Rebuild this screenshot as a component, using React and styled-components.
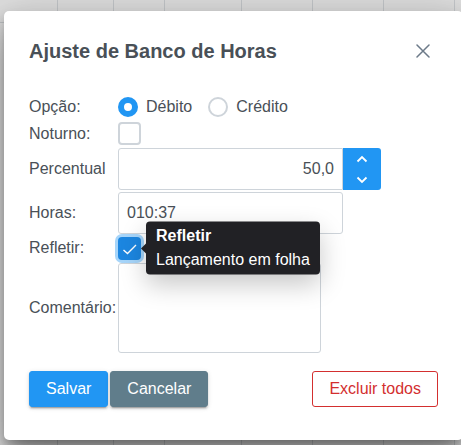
import React from "react";
import styled, { createGlobalStyle } from "styled-components";

const Global = createGlobalStyle`
  html, body { margin: 0; padding: 0; }
  body {
    font-family: "Liberation Sans", Arial, Helvetica, sans-serif;
    background: #ffffff;
    width: 461px;
    height: 445px;
    overflow: hidden;
  }
  * { box-sizing: border-box; }
`;

const Page = styled.div`
  width: 461px;
  height: 445px;
  position: relative;
  overflow: hidden;
  background: #fff;
`;

const GridTable = styled.div`
  display: flex;
  height: 445px;
`;

const GridCol = styled.div`
  width: ${(p) => p.$w}px;
  flex: none;
  border-right: 1px solid #dcdfe2;
  display: flex;
  flex-direction: column;
`;

const GridHead = styled.div`
  height: 23px;
  border-bottom: 1px solid #dcdfe2;
  background: #fafafa;
`;

const Mask = styled.div`
  position: absolute;
  inset: 0;
  background: rgba(0, 0, 0, 0.1);
  padding: 11px 0 0 4px;
  display: flex;
  align-items: flex-start;
`;

const Dialog = styled.div`
  width: 459px;
  height: 429px;
  flex: none;
  background: #ffffff;
  border-radius: 5px;
  box-shadow: 0 11px 15px -7px rgba(0, 0, 0, 0.3),
    0 24px 38px 3px rgba(0, 0, 0, 0.2), 0 9px 46px 8px rgba(0, 0, 0, 0.16),
    0 6px 10px rgba(0, 0, 0, 0.15);
  padding: 0 25px;
  display: flex;
  flex-direction: column;
`;

const Header = styled.div`
  display: flex;
  align-items: center;
  justify-content: space-between;
  height: 78px;
  padding-top: 2px;
`;

const Title = styled.h2`
  margin: 0;
  font-size: 20px;
  font-weight: 700;
  color: #495057;
  line-height: 24px;
`;

const CloseButton = styled.button`
  width: 32px;
  height: 32px;
  border: 0;
  background: transparent;
  display: flex;
  align-items: center;
  justify-content: center;
  padding: 0;
  margin-right: -1px;
  color: #6c757d;
`;

const Form = styled.div`
  margin-top: 6px;
  display: flex;
  flex-direction: column;
`;

const Row = styled.div`
  display: flex;
  align-items: center;
  height: ${(p) => p.$h}px;
  margin-bottom: ${(p) => p.$mb || 0}px;
`;

const Label = styled.label`
  width: 89px;
  flex: none;
  font-size: 16px;
  color: #495057;
  white-space: nowrap;
`;

const RadioGroup = styled.div`
  display: flex;
  align-items: center;
`;

const RadioBox = styled.span`
  width: 20px;
  height: 20px;
  border-radius: 50%;
  border: ${(p) => (p.$checked ? "6px solid #2196f3" : "2px solid #ced4da")};
  background: #fff;
  flex: none;
`;

const RadioLabel = styled.span`
  font-size: 16px;
  color: #495057;
  margin-left: 8px;
  margin-right: 16px;
`;

const CheckBox = styled.span`
  width: 23px;
  height: 23px;
  border-radius: 4px;
  border: 2px solid ${(p) => (p.$checked ? "#1c86e0" : "#ced4da")};
  background: ${(p) => (p.$checked ? "#1c86e0" : "#fff")};
  box-shadow: ${(p) => (p.$focus ? "0 0 0 3px #a6d5fa" : "none")};
  display: flex;
  align-items: center;
  justify-content: center;
  flex: none;
`;

const CheckWrap = styled.div`
  position: relative;
  display: flex;
`;

const InputGroup = styled.div`
  display: flex;
  height: 42px;
`;

const TextInput = styled.input`
  width: ${(p) => p.$w}px;
  height: 100%;
  border: 1px solid #ced4da;
  border-radius: ${(p) => (p.$joined ? "3px 0 0 3px" : "3px")};
  padding: 0 8px;
  font-family: inherit;
  font-size: 16px;
  color: #495057;
  text-align: ${(p) => p.$align || "left"};
  background: #fff;
  outline: none;
`;

const Spinner = styled.div`
  width: 38px;
  display: flex;
  flex-direction: column;
  background: #2196f3;
  border-radius: 0 3px 3px 0;
`;

const SpinButton = styled.button`
  flex: 1;
  border: 0;
  background: transparent;
  display: flex;
  align-items: center;
  justify-content: center;
  padding: 0;
  color: #fff;
`;

const TextArea = styled.textarea`
  width: 203px;
  height: 90px;
  border: 1px solid #ced4da;
  border-radius: 3px;
  resize: none;
  font-family: inherit;
  font-size: 16px;
  outline: none;
`;

const Tooltip = styled.div`
  position: absolute;
  left: calc(100% + 5px);
  top: 50%;
  transform: translateY(-50%);
  background: #212125;
  color: #fff;
  border-radius: 4px;
  padding: 2px 10px 3px;
  width: 174px;
  font-size: 16px;
  line-height: 24px;
  white-space: nowrap;
  box-shadow: 0 10px 26px rgba(0, 0, 0, 0.22);
  z-index: 2;

  &::before {
    content: "";
    position: absolute;
    left: -5px;
    top: 50%;
    margin-top: -5px;
    border-style: solid;
    border-width: 5px 5px 5px 0;
    border-color: transparent #212125 transparent transparent;
  }
`;

const TooltipTitle = styled.div`
  font-weight: 700;
`;

const Footer = styled.div`
  margin-top: 18px;
  display: flex;
  justify-content: space-between;
`;

const ButtonGroup = styled.div`
  display: flex;
  gap: 2px;
`;

const Button = styled.button`
  height: 36px;
  padding: 0 16px;
  font-family: inherit;
  font-size: 16px;
  border-radius: 3px;
  border: 1px solid ${(p) => p.$border};
  background: ${(p) => p.$bg};
  color: ${(p) => p.$color};
  box-shadow: ${(p) =>
    p.$raised
      ? "0 3px 1px -2px rgba(0,0,0,.2), 0 2px 2px 0 rgba(0,0,0,.14), 0 1px 5px 0 rgba(0,0,0,.12)"
      : "none"};
`;

const cols = [58, 56, 51, 77, 71, 71, 71, 60];

export default function App() {
  return (
    <Page>
      <Global />
      <GridTable>
        {cols.map((w, i) => (
          <GridCol key={i} $w={w}>
            <GridHead />
          </GridCol>
        ))}
      </GridTable>
      <Mask>
        <Dialog>
          <Header>
            <Title>Ajuste de Banco de Horas</Title>
            <CloseButton aria-label="Fechar">
              <svg width="14" height="14" viewBox="0 0 14 14">
                <path
                  d="M1 1 L13 13 M13 1 L1 13"
                  stroke="#6c7a89"
                  strokeWidth="1.5"
                  strokeLinecap="round"
                />
              </svg>
            </CloseButton>
          </Header>
          <Form>
            <Row $h={24} $mb={2}>
              <Label>Opção:</Label>
              <RadioGroup>
                <RadioBox $checked />
                <RadioLabel>Débito</RadioLabel>
                <RadioBox />
                <RadioLabel>Crédito</RadioLabel>
              </RadioGroup>
            </Row>
            <Row $h={25} $mb={2}>
              <Label>Noturno:</Label>
              <CheckBox />
            </Row>
            <Row $h={42} $mb={2}>
              <Label>Percentual</Label>
              <InputGroup>
                <TextInput $w={225} $joined $align="right" defaultValue="50,0" />
                <Spinner>
                  <SpinButton aria-label="Aumentar">
                    <svg width="12" height="8" viewBox="0 0 12 8">
                      <path d="M1.5 6.5 L6 2 L10.5 6.5" fill="none" stroke="#fff" strokeWidth="1.8" />
                    </svg>
                  </SpinButton>
                  <SpinButton aria-label="Diminuir">
                    <svg width="12" height="8" viewBox="0 0 12 8">
                      <path d="M1.5 1.5 L6 6 L10.5 1.5" fill="none" stroke="#fff" strokeWidth="1.8" />
                    </svg>
                  </SpinButton>
                </Spinner>
              </InputGroup>
            </Row>
            <Row $h={41}>
              <Label>Horas:</Label>
              <InputGroup>
                <TextInput $w={225} defaultValue="010:37" />
              </InputGroup>
            </Row>
            <Row $h={30}>
              <Label>Refletir:</Label>
              <CheckWrap>
                <CheckBox $checked $focus>
                  <svg width="16" height="14" viewBox="0 0 16 14">
                    <path d="M1.5 9 L5.5 12.5 L14 4" fill="none" stroke="#fff" strokeWidth="1.4" />
                  </svg>
                </CheckBox>
                <Tooltip>
                  <TooltipTitle>Refletir</TooltipTitle>
                  <div>Lançamento em folha</div>
                </Tooltip>
              </CheckWrap>
            </Row>
            <Row $h={90}>
              <Label>Comentário:</Label>
              <TextArea />
            </Row>
          </Form>
          <Footer>
            <ButtonGroup>
              <Button $raised $bg="#2196f3" $border="#2196f3" $color="#fff">
                Salvar
              </Button>
              <Button $raised $bg="#607d8b" $border="#607d8b" $color="#fff">
                Cancelar
              </Button>
            </ButtonGroup>
            <Button $bg="#fff" $border="#d32f2f" $color="#d32f2f">
              Excluir todos
            </Button>
          </Footer>
        </Dialog>
      </Mask>
    </Page>
  );
}
